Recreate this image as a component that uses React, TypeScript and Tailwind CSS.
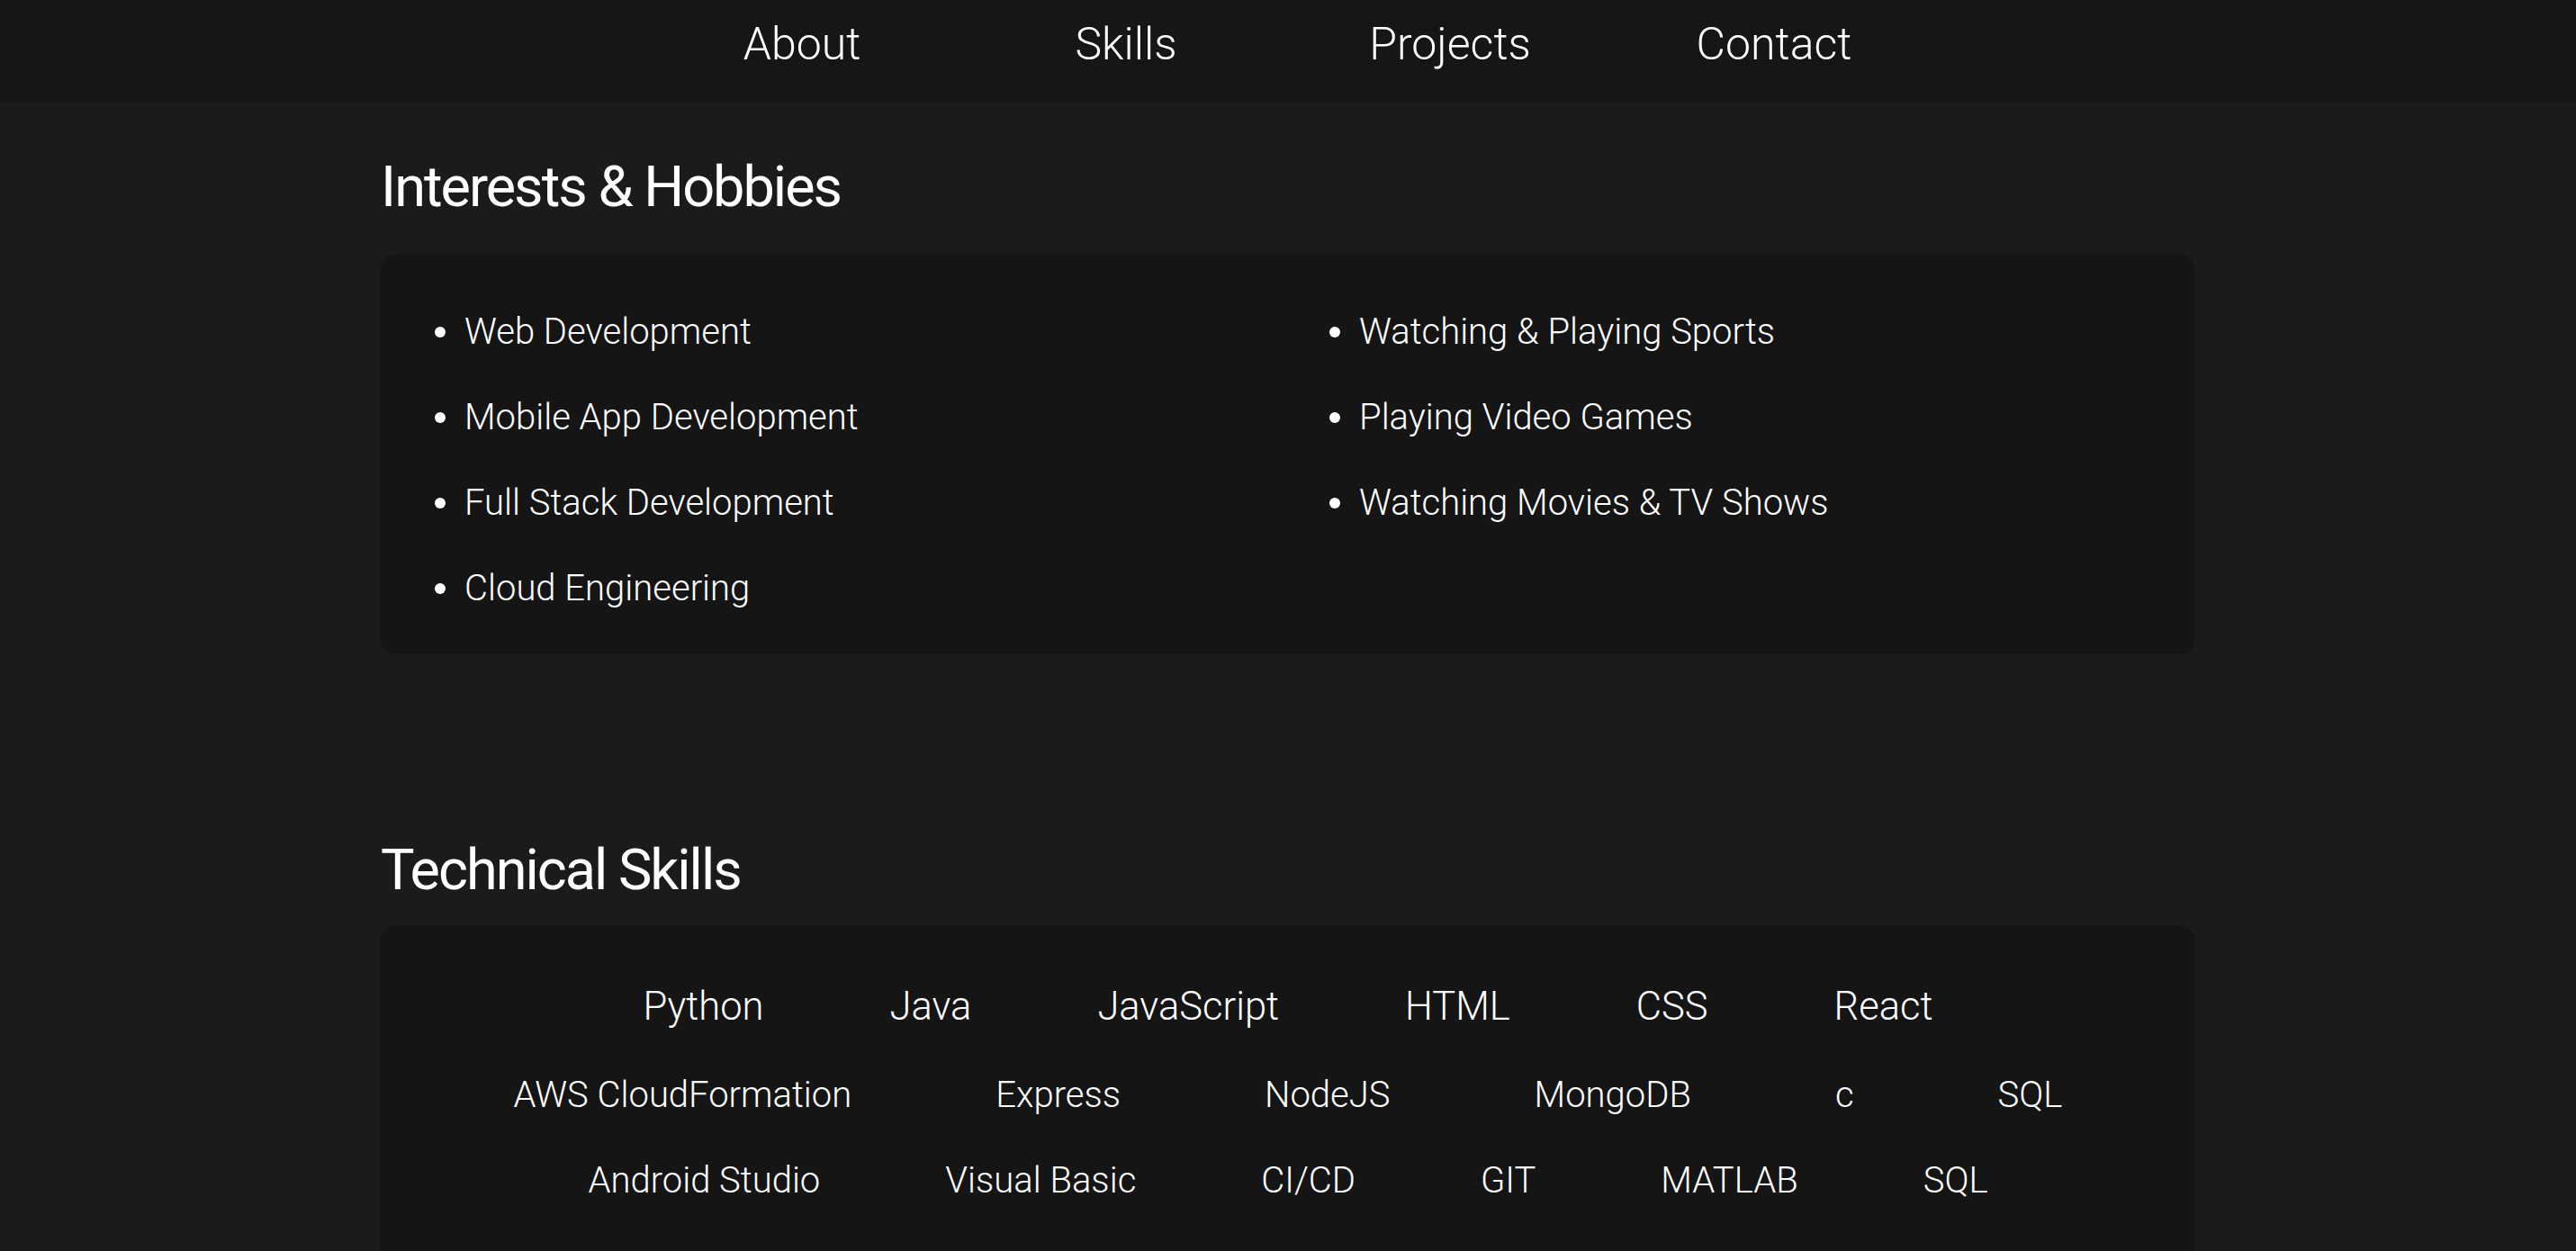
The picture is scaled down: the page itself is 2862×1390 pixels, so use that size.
import React from "react"

const navLinks = ["About", "Skills", "Projects", "Contact"]

const interestsLeft = [
  "Web Development",
  "Mobile App Development",
  "Full Stack Development",
  "Cloud Engineering",
]

const interestsRight = [
  "Watching & Playing Sports",
  "Playing Video Games",
  "Watching Movies & TV Shows",
]

const skillRows = [
  { items: ["Python", "Java", "JavaScript", "HTML", "CSS", "React"], cls: "gap-x-[140px] text-[43.5px] leading-[60px]" },
  { items: ["AWS CloudFormation", "Express", "NodeJS", "MongoDB", "c", "SQL"], cls: "gap-x-[160px] text-[40px] leading-[58px]" },
  { items: ["Android Studio", "Visual Basic", "CI/CD", "GIT", "MATLAB", "SQL"], cls: "gap-x-[139px] text-[40px] leading-[58px]" },
]

function Bullet({ text }: { text: string }) {
  return (
    <li className="flex items-center">
      <span className="w-[12px] h-[12px] rounded-full bg-white ml-[-33px] mr-[21px]" />
      <span>{text}</span>
    </li>
  )
}

export default function App() {
  return (
    <div className="min-h-screen bg-[#1b1b1b] text-white font-['Roboto',sans-serif] font-light">
      <nav className="h-[114px] bg-[#161616] flex justify-center pt-[19px]">
        <div className="grid grid-cols-4 w-[1440px]">
          {navLinks.map(link => (
            <a key={link} href="#" className="text-center text-[50px] leading-[60px] h-[60px]">
              {link}
            </a>
          ))}
        </div>
      </nav>

      <main className="w-[2016px] mx-auto">
        <section>
          <h2 className="text-[63px] leading-[76px] font-normal tracking-[-2px] mt-[56px] mb-[36px]">Interests &amp; Hobbies</h2>
          <div className="bg-[#151515] rounded-[18px] pt-[58px] pb-[45px] pl-[93px] flex">
            <ul className="w-[994px] text-[40px] leading-[57px] space-y-[38px]">
              {interestsLeft.map(i => <Bullet key={i} text={i} />)}
            </ul>
            <ul className="flex-1 text-[40px] leading-[57px] space-y-[38px]">
              {interestsRight.map(i => <Bullet key={i} text={i} />)}
            </ul>
          </div>
        </section>

        <section>
          <h2 className="text-[63px] leading-[76px] font-normal tracking-[-2px] mt-[202px] mb-[23px]">Technical Skills</h2>
          <div className="bg-[#151515] rounded-[18px] pt-[61px] pb-[80px] flex flex-col items-center">
            {skillRows.map((row, idx) => (
              <div key={idx} className={"flex justify-center " + row.cls + (idx === 1 ? " mt-[39px]" : idx === 2 ? " mt-[37px]" : "")}>
                {row.items.map((s, j) => <span key={j}>{s}</span>)}
              </div>
            ))}
          </div>
        </section>
      </main>
    </div>
  )
}
